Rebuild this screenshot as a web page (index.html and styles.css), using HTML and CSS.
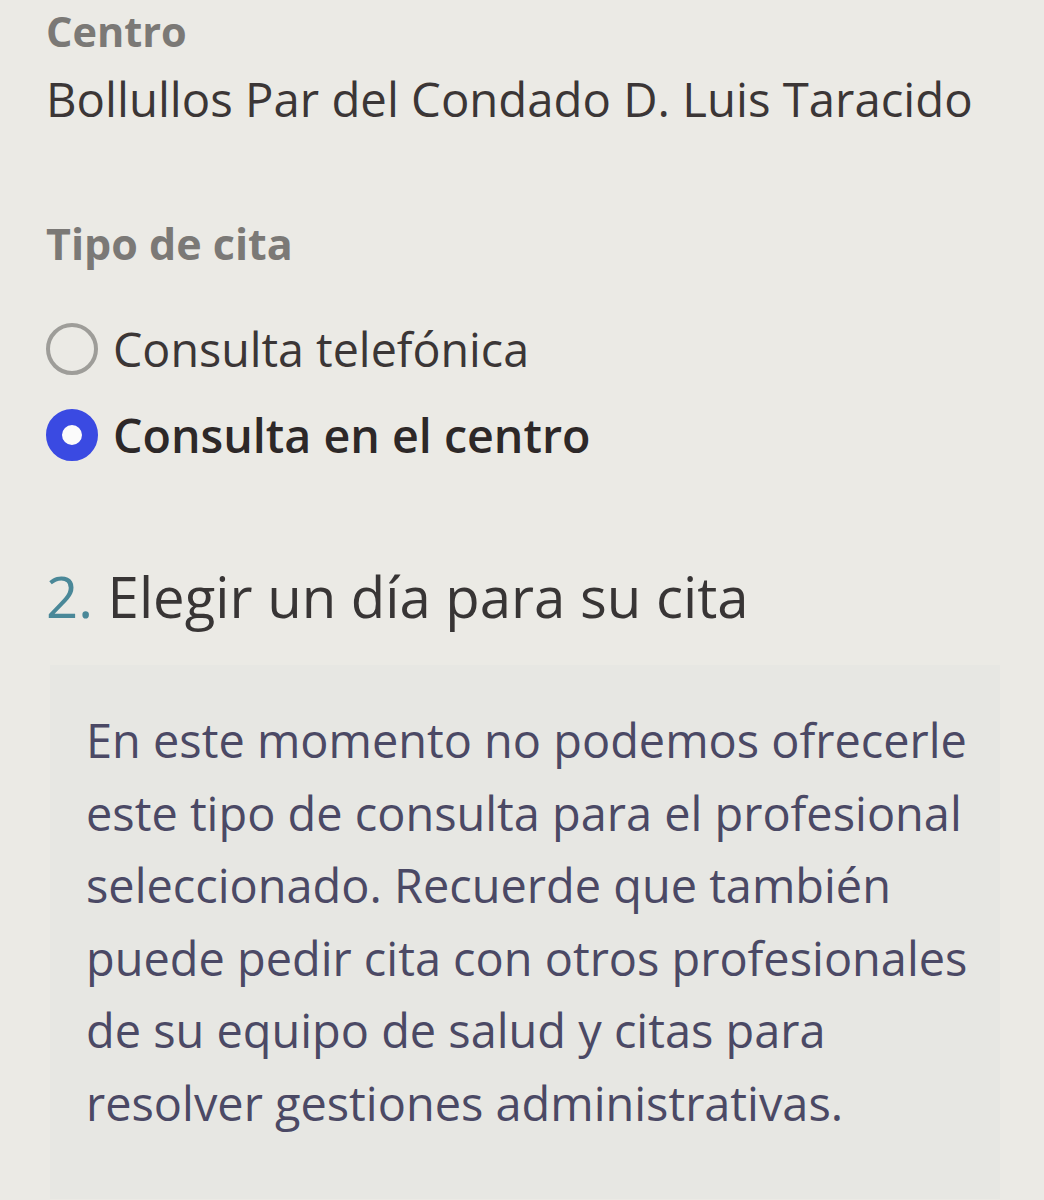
FILE: index.html
```html
<!DOCTYPE html>
<html lang="es">
<head>
<meta charset="utf-8">
<title>Cita</title>
<link rel="stylesheet" href="styles.css">
</head>
<body>
<main class="page">
  <section class="field">
    <div class="label">Centro</div>
    <div class="value">Bollullos Par del Condado D. Luis Taracido</div>
  </section>

  <section class="field">
    <div class="label label-type">Tipo de cita</div>
    <div class="radios">
      <label class="radio-row">
        <span class="radio"></span>
        <span class="radio-text">Consulta telefónica</span>
      </label>
      <label class="radio-row is-checked">
        <span class="radio"></span>
        <span class="radio-text">Consulta en el centro</span>
      </label>
    </div>
  </section>

  <h2 class="step"><span class="step-num">2.</span> Elegir un día para su cita</h2>

  <div class="notice">
    <p>En este momento no podemos ofrecerle este tipo de consulta para el profesional seleccionado. Recuerde que también puede pedir cita con otros profesionales de su equipo de salud y citas para resolver gestiones administrativas.</p>
  </div>
</main>
</body>
</html>
```
FILE: styles.css
```css
html, body {
  margin: 0;
  padding: 0;
  background: #ebeae5;
}
body {
  font-family: "Open Sans", "Noto Sans", sans-serif;
  overflow: hidden;
}
.page {
  padding: 6px 0 0 46px;
}
.label {
  font-size: 41.5px;
  line-height: 50px;
  font-weight: 700;
  color: #7b7976;
}
.value {
  margin-top: 8px;
  font-size: 47.3px;
  line-height: 70px;
  color: #3b3636;
  white-space: nowrap;
}
.label-type {
  font-size: 43px;
  margin-top: 85px;
}
.radios {
  margin-top: 37px;
  display: flex;
  flex-direction: column;
}
.radio-row {
  display: flex;
  align-items: center;
  gap: 15px;
  height: 86px;
}
.radio {
  box-sizing: border-box;
  width: 52px;
  height: 52px;
  border-radius: 50%;
  border: 4px solid #9e9d99;
  background: transparent;
  flex: none;
}
.is-checked .radio {
  border: 16px solid #3a4ae2;
  background: #fbfbfb;
}
.radio-text {
  font-size: 46.6px;
  line-height: 86px;
  color: #3b3636;
}
.is-checked .radio-text {
  font-weight: 600;
  color: #2d2828;
}
.step {
  margin: 83px 0 0 0;
  font-size: 56.3px;
  line-height: 70px;
  font-weight: 400;
  color: #383535;
}
.step-num {
  color: #4a8898;
}
.notice {
  margin: 34px 0 0 4px;
  width: 950px;
  height: 534px;
  box-sizing: border-box;
  padding: 39px 14px 0 36px;
  background: #e7e7e3;
}
.notice p {
  margin: 0;
  font-size: 46.9px;
  line-height: 72.6px;
  color: #4b4965;
}
```
